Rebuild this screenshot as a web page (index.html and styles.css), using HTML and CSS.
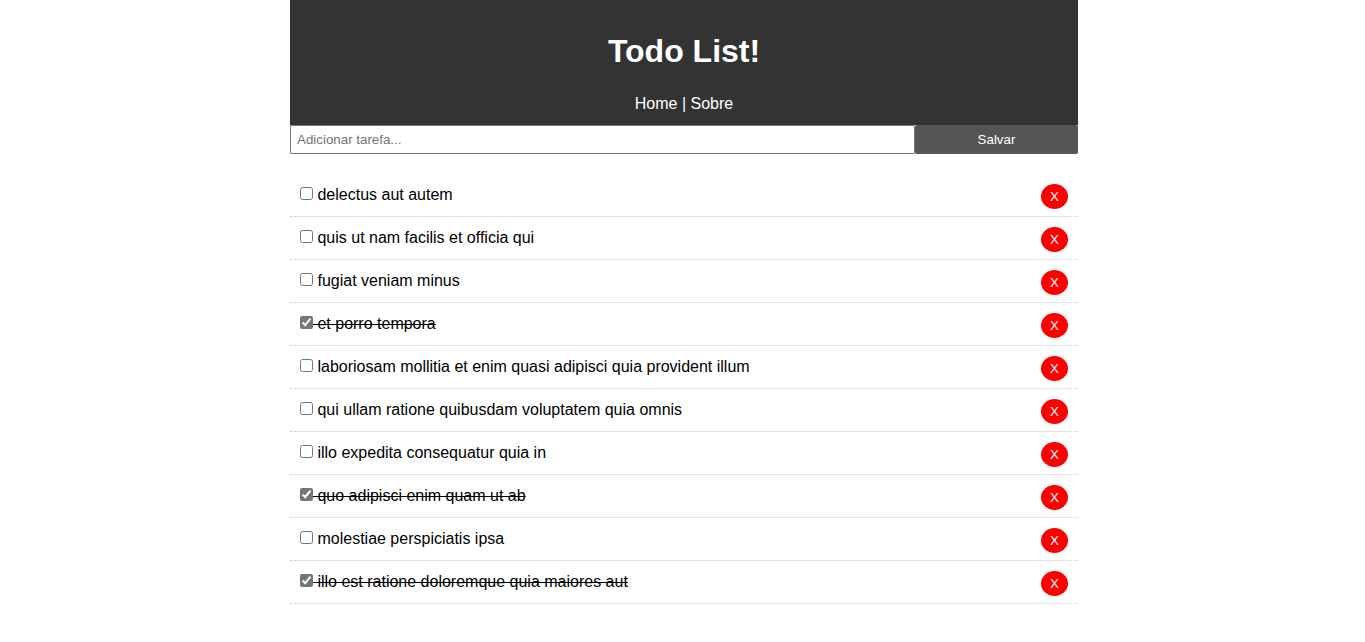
FILE: index.html
```html
<!DOCTYPE html>
<html lang="pt-BR">
<head>
<meta charset="utf-8">
<meta name="viewport" content="width=device-width, initial-scale=1">
<title>Todo List!</title>
<link rel="stylesheet" href="styles.css">
</head>
<body>
<div class="container">
  <header class="header">
    <h1 class="title">Todo List!</h1>
    <nav><a class="link" href="#home">Home</a> | <a class="link" href="#sobre">Sobre</a></nav>
  </header>
  <main>
    <form class="add-form">
      <input class="add-input" type="text" name="title" placeholder="Adicionar tarefa..." aria-label="Adicionar tarefa">
      <button class="save" type="submit">Salvar</button>
    </form>
    <ul class="list">
      <li class="item"><label class="task"><input class="check" type="checkbox"> delectus aut autem</label><button class="remove" type="button">X</button></li>
      <li class="item"><label class="task"><input class="check" type="checkbox"> quis ut nam facilis et officia qui</label><button class="remove" type="button">X</button></li>
      <li class="item"><label class="task"><input class="check" type="checkbox"> fugiat veniam minus</label><button class="remove" type="button">X</button></li>
      <li class="item"><label class="task done"><input class="check" type="checkbox" checked> et porro tempora</label><button class="remove" type="button">X</button></li>
      <li class="item"><label class="task"><input class="check" type="checkbox"> laboriosam mollitia et enim quasi adipisci quia provident illum</label><button class="remove" type="button">X</button></li>
      <li class="item"><label class="task"><input class="check" type="checkbox"> qui ullam ratione quibusdam voluptatem quia omnis</label><button class="remove" type="button">X</button></li>
      <li class="item"><label class="task"><input class="check" type="checkbox"> illo expedita consequatur quia in</label><button class="remove" type="button">X</button></li>
      <li class="item"><label class="task done"><input class="check" type="checkbox" checked> quo adipisci enim quam ut ab</label><button class="remove" type="button">X</button></li>
      <li class="item"><label class="task"><input class="check" type="checkbox"> molestiae perspiciatis ipsa</label><button class="remove" type="button">X</button></li>
      <li class="item"><label class="task done"><input class="check" type="checkbox" checked> illo est ratione doloremque quia maiores aut</label><button class="remove" type="button">X</button></li>
    </ul>
  </main>
</div>
</body>
</html>
```
FILE: styles.css
```css
* {
  box-sizing: border-box;
  margin: 0;
  padding: 0;
}

body {
  padding-left: 3px;
  background: #fff;
  color: #000;
  font-family: "Liberation Sans", Arial, sans-serif;
  font-size: 16px;
  line-height: 22px;
}

.container {
  max-width: 788px;
  margin: 0 auto;
}

.header {
  padding: 29px 10px 10px;
  background: #333;
  color: #fff;
  text-align: center;
}

.title {
  margin-bottom: 20px;
  font-size: 32px;
  line-height: 44px;
}

.link {
  color: #fff;
  text-decoration: none;
}

.add-form {
  display: flex;
  margin-bottom: 20px;
}

.add-input {
  flex: 1;
  min-width: 0;
  height: 29px;
  padding: 5px 6px;
  border: 1px solid #767676;
  border-radius: 1px;
  background: #fff;
  font-family: inherit;
}

.add-input::placeholder {
  color: #757575;
}

.save {
  width: 163px;
  border: 0;
  border-radius: 2px;
  background: #555;
  color: #fff;
  font-family: inherit;
  cursor: pointer;
}

.list {
  list-style: none;
}

.item {
  display: flex;
  align-items: flex-start;
  justify-content: space-between;
  padding: 10px;
  border-bottom: 1px dotted #ccc;
}

.done {
  text-decoration: line-through;
}

.check {
  width: 13px;
  height: 13px;
  accent-color: #767676;
}

.remove {
  width: 27px;
  height: 25px;
  margin-bottom: -3px;
  border: 0;
  border-radius: 50%;
  background: #f00;
  color: #fff;
  font-family: inherit;
  cursor: pointer;
}
```
